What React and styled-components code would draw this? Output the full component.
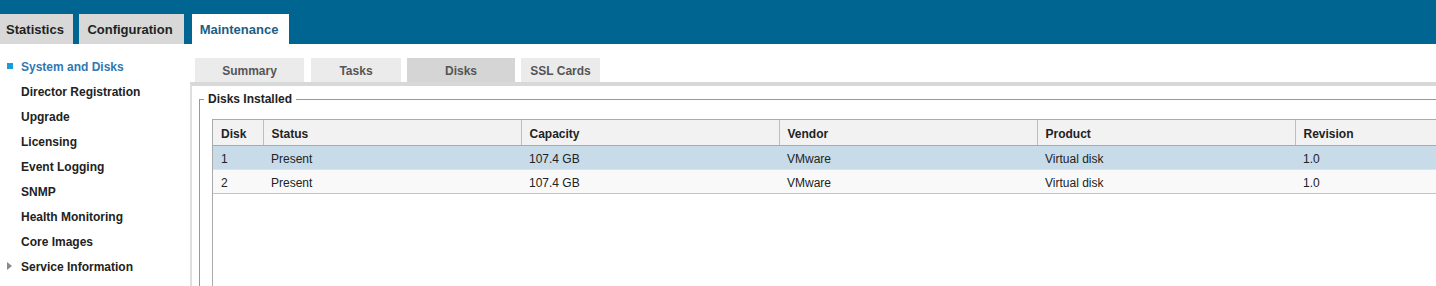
import React from "react";
import styled, { createGlobalStyle } from "styled-components";

const Global = createGlobalStyle`
  html, body {
    margin: 0;
    padding: 0;
    height: 286px;
    overflow: hidden;
    background: #ffffff;
    font-family: "Liberation Sans", Arial, sans-serif;
  }
`;

const Page = styled.div`
  width: 1436px;
  height: 286px;
  overflow: hidden;
  display: flex;
  flex-direction: column;
`;

const TopBar = styled.div`
  height: 44px;
  background: #006691;
  display: flex;
  align-items: flex-end;
  gap: 6px;
  flex-shrink: 0;
`;

const TopTab = styled.div`
  width: ${(p) => p.$w}px;
  height: 30px;
  margin-left: ${(p) => p.$ml || 0}px;
  display: flex;
  align-items: center;
  justify-content: center;
  font-size: 13px;
  font-weight: bold;
  background: ${(p) => (p.$active ? "#ffffff" : "#d8d8d8")};
  color: ${(p) => (p.$active ? "#1b5d87" : "#222222")};
  box-sizing: border-box;
  padding-right: 3px;
`;

const Body = styled.div`
  display: flex;
  flex: 1;
  min-height: 0;
`;

const Sidebar = styled.nav`
  width: 190px;
  flex-shrink: 0;
  padding-top: 10px;
  display: flex;
  flex-direction: column;
`;

const NavItem = styled.div`
  height: 25px;
  flex-shrink: 0;
  display: flex;
  align-items: center;
  padding-left: 21px;
  position: relative;
  font-size: 12px;
  font-weight: bold;
  color: ${(p) => (p.$active ? "#2f78b3" : "#222222")};
`;

const Bullet = styled.span`
  position: absolute;
  left: 7px;
  top: 9px;
  width: 6px;
  height: 6px;
  background: #1c9bd7;
`;

const Caret = styled.span`
  position: absolute;
  left: 7px;
  top: 8px;
  width: 0;
  height: 0;
  border-top: 4.5px solid transparent;
  border-bottom: 4.5px solid transparent;
  border-left: 5px solid #8a8a8a;
`;

const Main = styled.div`
  flex: 1;
  min-width: 0;
  padding-top: 14px;
  display: flex;
  flex-direction: column;
`;

const SubTabs = styled.div`
  display: flex;
  flex-shrink: 0;
  padding-left: 5px;
  gap: 7px;
  height: 24px;
`;

const SubTab = styled.div`
  width: ${(p) => p.$w}px;
  margin-left: ${(p) => p.$ml || 0}px;
  display: flex;
  align-items: center;
  justify-content: center;
  padding-top: 2px;
  box-sizing: border-box;
  font-size: 12px;
  font-weight: bold;
  color: #555555;
  background: ${(p) => (p.$active ? "#d5d5d5" : "#ebebeb")};
`;

const Panel = styled.div`
  flex: 1;
  min-height: 0;
  border-top: 4px solid #d8d8d8;
  border-left: 2px solid #dedede;
  padding: 6px 0 0 7px;
  box-sizing: border-box;
`;

const Fieldset = styled.fieldset`
  margin: 0;
  padding: 13px 0 0 12px;
  border: 1px solid #999999;
  border-right: none;
  border-bottom: none;
  min-width: 0;
  height: 300px;
  box-sizing: border-box;
`;

const Legend = styled.legend`
  font-size: 12px;
  font-weight: bold;
  color: #222222;
  padding: 0 4px;
  margin-left: -8px;
  line-height: 14px;
`;

const Grid = styled.div`
  width: 1400px;
  height: 260px;
  border: 1px solid #aaaaaa;
  background: #ffffff;
`;

const Table = styled.table`
  border-collapse: collapse;
  table-layout: fixed;
  width: 1398px;
  font-size: 12px;
  color: #222222;
`;

const Th = styled.th`
  height: 25px;
  padding: 4px 0 0 8px;
  text-align: left;
  font-weight: bold;
  background: #f2f2f2;
  border-right: 1px solid #bdbdbd;
  border-bottom: 1px solid #aaaaaa;
  box-sizing: border-box;
`;

const Tr = styled.tr`
  background: ${(p) => (p.$selected ? "#c8dbe9" : "#f9f9f9")};
`;

const Td = styled.td`
  height: 24px;
  padding: 4px 0 0 8px;
  box-sizing: border-box;
  border-bottom: 1px solid ${(p) => (p.$last ? "#c4c4c4" : "#e2e2e2")};
`;

const navItems = [
  "System and Disks",
  "Director Registration",
  "Upgrade",
  "Licensing",
  "Event Logging",
  "SNMP",
  "Health Monitoring",
  "Core Images",
  "Service Information",
];

const columns = [
  { label: "Disk", w: 50 },
  { label: "Status", w: 258 },
  { label: "Capacity", w: 258 },
  { label: "Vendor", w: 258 },
  { label: "Product", w: 258 },
  { label: "Revision", w: 316 },
];

const rows = [
  ["1", "Present", "107.4 GB", "VMware", "Virtual disk", "1.0"],
  ["2", "Present", "107.4 GB", "VMware", "Virtual disk", "1.0"],
];

export default function App() {
  return (
    <Page>
      <Global />
      <TopBar>
        <TopTab $w={73}>Statistics</TopTab>
        <TopTab $w={105}>Configuration</TopTab>
        <TopTab $w={97} $ml={2} $active>
          Maintenance
        </TopTab>
      </TopBar>
      <Body>
        <Sidebar>
          {navItems.map((item, i) => (
            <NavItem key={item} $active={i === 0}>
              {i === 0 && <Bullet />}
              {i === navItems.length - 1 && <Caret />}
              {item}
            </NavItem>
          ))}
        </Sidebar>
        <Main>
          <SubTabs>
            <SubTab $w={109}>Summary</SubTab>
            <SubTab $w={90}>Tasks</SubTab>
            <SubTab $w={108} $ml={-1} $active>
              Disks
            </SubTab>
            <SubTab $w={79} $ml={-1}>
              SSL Cards
            </SubTab>
          </SubTabs>
          <Panel>
            <Fieldset>
              <Legend>Disks Installed</Legend>
              <Grid>
                <Table>
                  <colgroup>
                    {columns.map((c) => (
                      <col key={c.label} style={{ width: c.w }} />
                    ))}
                  </colgroup>
                  <thead>
                    <tr>
                      {columns.map((c) => (
                        <Th key={c.label}>{c.label}</Th>
                      ))}
                    </tr>
                  </thead>
                  <tbody>
                    {rows.map((r, i) => (
                      <Tr key={i} $selected={i === 0}>
                        {r.map((cell, j) => (
                          <Td key={j} $last={i === rows.length - 1}>
                            {cell}
                          </Td>
                        ))}
                      </Tr>
                    ))}
                  </tbody>
                </Table>
              </Grid>
            </Fieldset>
          </Panel>
        </Main>
      </Body>
    </Page>
  );
}
